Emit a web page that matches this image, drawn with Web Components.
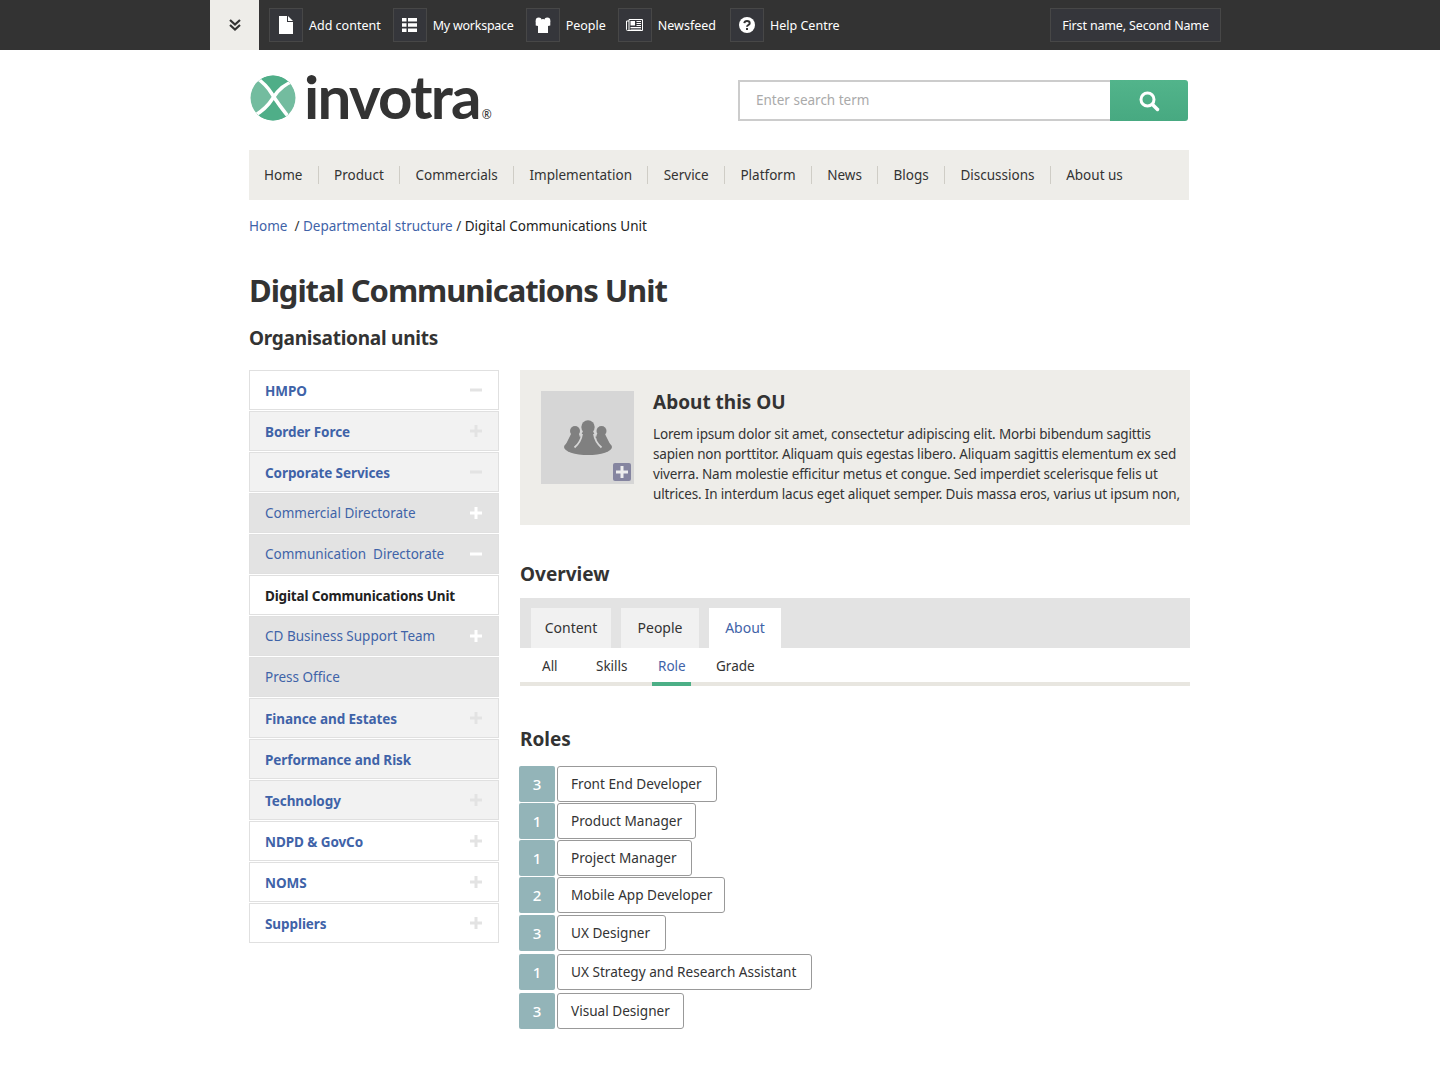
<!DOCTYPE html>
<html lang="en">
<head>
<meta charset="utf-8">
<title>Digital Communications Unit</title>
<style>
	html, body { margin: 0; padding: 0; background: #fff; }
	body { font: 13.5px/20px "Noto Sans", sans-serif; color: #333; }
	.page { width: 942px; margin: 0 0 0 249px; }
	.columns { display: flex; gap: 21px; align-items: flex-start; }
</style>
</head>
<body>
<top-bar>
	<top-action label="Add content" icon="file"></top-action>
	<top-action label="My workspace" icon="list" style="letter-spacing:-.25px"></top-action>
	<top-action label="People" icon="people"></top-action>
	<top-action label="Newsfeed" icon="news"></top-action>
	<top-action label="Help Centre" icon="help" style="margin-left:2px"></top-action>
</top-bar>
<div class="page">
	<site-header></site-header>
	<main-nav items="Home,Product,Commercials,Implementation,Service,Platform,News,Blogs,Discussions,About us"></main-nav>
	<bread-crumbs></bread-crumbs>
	<page-title></page-title>
	<div class="columns">
		<ou-tree>
			<ou-item level="0" sign="minus">HMPO</ou-item>
			<ou-item level="1" sign="plus">Border Force</ou-item>
			<ou-item level="1" sign="minus">Corporate Services</ou-item>
			<ou-item level="2" sign="plus">Commercial Directorate</ou-item>
			<ou-item level="2" sign="minus">Communication&nbsp; Directorate</ou-item>
			<ou-item level="0" current>Digital Communications Unit</ou-item>
			<ou-item level="2" sign="plus">CD Business Support Team</ou-item>
			<ou-item level="2">Press Office</ou-item>
			<ou-item level="1" sign="plus">Finance and Estates</ou-item>
			<ou-item level="1">Performance and Risk</ou-item>
			<ou-item level="1" sign="plus">Technology</ou-item>
			<ou-item level="0" sign="plus">NDPD &amp; GovCo</ou-item>
			<ou-item level="0" sign="plus">NOMS</ou-item>
			<ou-item level="0" sign="plus">Suppliers</ou-item>
		</ou-tree>
		<div>
			<about-panel></about-panel>
			<overview-tabs></overview-tabs>
			<role-list>
				<role-chip count="3" style="--w:160px">Front End Developer</role-chip>
				<role-chip count="1" style="--w:139px">Product Manager</role-chip>
				<role-chip count="1" style="--w:135px">Project Manager</role-chip>
				<role-chip count="2" style="--w:168px">Mobile App Developer</role-chip>
				<role-chip count="3" style="--w:109px;margin-top:1px">UX Designer</role-chip>
				<role-chip count="1" style="--w:255px;margin-top:2px">UX Strategy and Research Assistant</role-chip>
				<role-chip count="3" style="--w:127px;margin-top:2px">Visual Designer</role-chip>
			</role-list>
		</div>
	</div>
</div>

<script>
"use strict";

(function() {
	const FONT = `"Noto Sans", sans-serif`;

	const ICONS = {
		file: `<svg width="14" height="18" viewBox="0 0 14 18"><path fill="#fff" d="M0 0h8v6h6v12H0z"/><path fill="#fff" d="M9 0l5 5H9z"/></svg>`,
		list: `<svg width="15" height="14" viewBox="0 0 15 14"><path fill="#fff" d="M0 0h4.500v3.500H0zM6 0h9v3.500H6zM0 5.300h4.500v3.400H0zM6 5.300h9v3.400H6zM0 10.500h4.500V14H0zM6 10.500h9V14H6z"/></svg>`,
		people: `<svg width="16" height="16" viewBox="0 0 16 16" fill="#fff"><circle cx="3.700" cy="3.500" r="3"/><circle cx="12.300" cy="3.500" r="3"/><circle cx="8" cy="4.500" r="2.500"/><path d="M.7 4h14.600v4.500L13 9v7H3V9L.7 8.500z"/></svg>`,
		news: `<svg width="17" height="12" viewBox="0 0 17 12"><path fill="none" stroke="#fff" d="M3 .500h13.500v11H3zM3 2H.5v8.500a1 1 0 0 0 1 1H3"/><path fill="#fff" d="M4.500 2H9v4.500H4.500zM10.500 2H15v1h-4.500zM10.500 4H15v1h-4.500zM10.500 6H15v1h-4.500zM4.500 8H15v1H4.500zM4.500 9.800H15v.8H4.500z"/></svg>`,
		help: `<svg width="16" height="16" viewBox="0 0 16 16"><circle cx="8" cy="8" r="8" fill="#fff"/><path fill="none" stroke="#333" stroke-width="2" d="M5.300 6.200C5.500 4.800 6.600 4 8 4c1.500 0 2.700.9 2.700 2.200C10.700 8 8 8 8 9.800"/><rect x="7" y="11" width="2" height="2" fill="#333"/></svg>`
	};

	function define(name, css, html) {
		customElements.define(name, class extends HTMLElement {
			constructor() {
				super();
				this.attachShadow({mode: "open"}).innerHTML = `<style>${css}</style>${typeof html === "function" ? html(this) : html}`;
			}
		});
	}

	define("top-bar", `
		:host { display: flex; height: 50px; background: #333; padding-left: 210px; font: 12.500px/20px ${FONT}; color: #fff; }
		.toggle { width: 49px; background: #eeede9; display: flex; align-items: center; justify-content: center; }
		.actions { display: flex; align-items: center; padding-left: 10px; width: 781px; }
		.user { margin-top: 8px; width: 169px; height: 32px; border: 1px solid #474747; background: #35363b; text-align: center; line-height: 33px; letter-spacing: -.15px; }
	`, `
		<div class="toggle"><svg width="14" height="14" viewBox="0 0 14 14" fill="none" stroke="#333" stroke-width="2.200"><path d="M2 2l5 4.500L12 2M2 7l5 4.500L12 7"/></svg></div>
		<div class="actions"><slot></slot></div>
		<div class="user">First name, Second Name</div>
	`);

	define("top-action", `
		:host { display: flex; align-items: center; }
		.box { box-sizing: border-box; width: 34px; height: 34px; border: 1px solid #474747; background: #35363b; display: flex; align-items: center; justify-content: center; }
		.label { padding: 1px 12px 0 6px; }
	`, el => `<div class="box">${ICONS[el.getAttribute("icon")]}</div><div class="label">${el.getAttribute("label")}</div>`);

	define("site-header", `
		:host { display: flex; height: 100px; justify-content: space-between; }
		.logo { display: flex; margin-top: 23px; height: 50px; }
		.logo svg { margin-top: 1px; }
		.word { font: 700 60px/46px "Lato", sans-serif; color: #333; letter-spacing: -1.700px; margin-left: 7px; }
		.reg { font: 12px/12px ${FONT}; color: #333; align-self: flex-end; margin: 0 0 2px 2px; }
		form { display: flex; margin: 30px 3px 0 0; height: 41px; }
		.input { box-sizing: border-box; width: 372px; border: 2px solid #ccc; border-right: 0; padding-left: 16px; line-height: 36px; color: #aaa; }
		.go { width: 78px; background: linear-gradient(#52b48b, #47a981); border-radius: 0 3px 3px 0; display: flex; align-items: center; justify-content: center; }
	`, `
		<div class="logo">
			<svg width="48" height="48" viewBox="0 0 48 48">
				<defs><clipPath id="disc"><circle cx="24" cy="24" r="22.500"/></clipPath></defs>
				<g clip-path="url(#disc)">
					<circle cx="24" cy="24" r="23" fill="#73bc9f"/>
					<path fill="#4fae88" d="M5 0h40v8Q32 12 24 21 16 11 5 3z"/>
					<path fill="#4fae88" d="M44 44v4H0l3-6Q16 38 24 25 32 34 44 44z"/>
					<path fill="none" stroke="#fff" stroke-width="3.500" d="M5 2Q17 10 23 20T42 46"/>
					<path fill="none" stroke="#fff" stroke-width="3.500" d="M47 6Q32 11 24 24T1 44"/>
				</g>
			</svg>
			<span class="word">invotra</span><span class="reg">®</span>
		</div>
		<form>
			<div class="input">Enter search term</div>
			<div class="go"><svg width="22" height="22" viewBox="0 0 22 22" fill="none" stroke="#fff"><circle cx="9.500" cy="9.500" r="6.500" stroke-width="3"/><path stroke-width="3.500" stroke-linecap="round" d="M14.500 14.500l5 5"/></svg></div>
		</form>
	`);

	define("main-nav", `
		:host { display: flex; box-sizing: border-box; width: 940px; height: 50px; background: #eeede9; align-items: center; padding-left: 15px; }
		span { color: #333; }
		i { width: 1px; height: 18px; background: #cfcdc6; margin: 0 15.350px; }
		span:first-child { margin-top: 3px; }
	`, el => el.getAttribute("items").split(",").map(t => `<span>${t}</span>`).join("<i></i>"));

	define("bread-crumbs", `
		:host { display: block; padding-top: 16px; height: 34px; }
		a { color: #3f63a8; }
	`, `<a>Home</a>&nbsp; /&nbsp;<a>Departmental structure</a> /&nbsp;<span style="color:#222">Digital Communications Unit</span>`);

	define("page-title", `
		:host { display: block; color: #333; }
		h1 { margin: 20px 0 0; font: 700 31px/40px ${FONT}; letter-spacing: -1.05px; }
		h2 { margin: 14px 0 0; font: 700 19px/28px ${FONT}; letter-spacing: -.25px; }
		div { height: 18px; }
	`, `<h1>Digital Communications Unit</h1><h2>Organisational units</h2><div></div>`);

	define("ou-tree", `
		:host { display: flex; flex-direction: column; gap: 1px; width: 250px; flex: none; }
	`, `<slot></slot>`);

	define("ou-item", `
		:host { display: flex; box-sizing: border-box; height: 40px; border: 1px solid #e0e0e0; align-items: center; justify-content: space-between; padding: 0 16px 0 15px; color: #3f63a8; background: #fff; }
		:host([level="0"]), :host([level="1"]) { font-weight: 700; letter-spacing: -.08px; padding-top: 2px; }
		:host([level="1"]) { background: #f2f2f2; }
		:host([level="2"]) { background: #e3e3e3; }
		:host([current]) { font-weight: 700; color: #222; background: #fff; letter-spacing: -.16px; }
		svg { display: block; fill: #e3e3e3; margin-top: -2px; }
		:host([level="2"]) svg { fill: #fff; margin-top: 0; }
	`, el => {
		let sign = el.getAttribute("sign");
		let d = sign === "plus" ? "M0 4.500h12v3H0zM4.500 0h3v12h-3z" : "M0 4.500h12v3H0z";
		return `<slot></slot>${sign ? `<svg width="12" height="12" viewBox="0 0 12 12"><path d="${d}"/></svg>` : ""}`;
	});

	define("about-panel", `
		:host { display: flex; box-sizing: border-box; width: 670px; height: 155px; background: #eeede9; padding: 21px 10px 0 21px; gap: 19px; }
		.pic { position: relative; flex: none; width: 93px; height: 93px; background: #d6d6d6; display: flex; align-items: center; justify-content: center; }
		.add { position: absolute; right: 3px; bottom: 3px; width: 18px; height: 18px; border-radius: 2px; background: #8585a0; display: flex; align-items: center; justify-content: center; }
		h2 { margin: -1px 0 10px; font: 700 19px/24px ${FONT}; }
		p { margin: 0; color: #333; letter-spacing: -.16px; }
	`, `
		<div class="pic">
			<svg width="48" height="35" viewBox="0 0 48 35" fill="#808080">
				<circle cx="24" cy="7" r="6.700"/><circle cx="11" cy="11" r="5"/><circle cx="37.500" cy="11" r="5"/>
				<ellipse cx="24" cy="27" rx="24" ry="8"/>
				<path d="M19 11h10l7 16H12zM7 14h8l3 10H2zM41 14h-8l-3 10h16z"/>
				<path fill="none" stroke="#d6d6d6" stroke-width="1.800" d="M18 14Q17 22 10.500 27.500M30 14Q31 22 37.500 27.500"/>
			</svg>
			<div class="add"><svg width="12" height="12" viewBox="0 0 12 12" fill="#eee"><path d="M0 4.500h12v3H0zM4.500 0h3v12h-3z"/></svg></div>
		</div>
		<div>
			<h2>About this OU</h2>
			<p>Lorem ipsum dolor sit amet, consectetur adipiscing elit. Morbi bibendum sagittis sapien non porttitor. Aliquam quis egestas libero. Aliquam sagittis elementum ex sed viverra. Nam molestie efficitur metus et congue. Sed imperdiet scelerisque felis ut ultrices. In interdum lacus eget aliquet semper. Duis massa eros, varius ut ipsum non,</p>
		</div>
	`);

	define("overview-tabs", `
		:host { display: block; width: 670px; font-size: 14px; }
		h2 { margin: 36px 0 11px; font: 700 19px/26px ${FONT}; }
		.tabs { display: flex; height: 40px; padding: 10px 0 0 11px; gap: 10px; background: #e3e3e3; }
		.tabs span { background: #f1f1f1; line-height: 40px; text-align: center; }
		.tabs .on { background: #fff; color: #3f63a8; }
		.sub { display: flex; height: 34px; border-bottom: 4px solid #e8e6e0; position: relative; font-size: 13.500px; }
		.sub span { position: absolute; top: 8px; }
		.sub .on { color: #3f63a8; }
		.bar { position: absolute; left: 132px; top: 34px; width: 39px; height: 4px; background: #4caf86; }
	`, `
		<h2>Overview</h2>
		<div class="tabs">
			<span style="width:80px">Content</span>
			<span style="width:78px">People</span>
			<span class="on" style="width:72px">About</span>
		</div>
		<div class="sub">
			<span style="left:22px">All</span>
			<span style="left:76px">Skills</span>
			<span class="on" style="left:138px">Role</span>
			<span style="left:196px">Grade</span>
			<div class="bar"></div>
		</div>
	`);

	define("role-list", `
		:host { display: flex; flex-direction: column; align-items: flex-start; gap: 1px; margin-left: -1px; }
		h2 { margin: 40px 0 13px 1px; font: 700 19px/26px ${FONT}; }
	`, `<h2>Roles</h2><slot></slot>`);

	define("role-chip", `
		:host { display: flex; height: 36px; gap: 2px; }
		.n { width: 36px; background: #93b4b8; color: #fff; border-radius: 2px; text-align: center; line-height: 37px; font-weight: 500; font-size: 15px; }
		.t { box-sizing: border-box; width: var(--w, auto); border: 1px solid #999; border-radius: 3px; background: #fff; padding: 0 13px; line-height: 34px; font-size: 13.600px; white-space: nowrap; }
	`, el => `<div class="n">${el.getAttribute("count")}</div><div class="t"><slot></slot></div>`);
})();
</script>
</body>
</html>
